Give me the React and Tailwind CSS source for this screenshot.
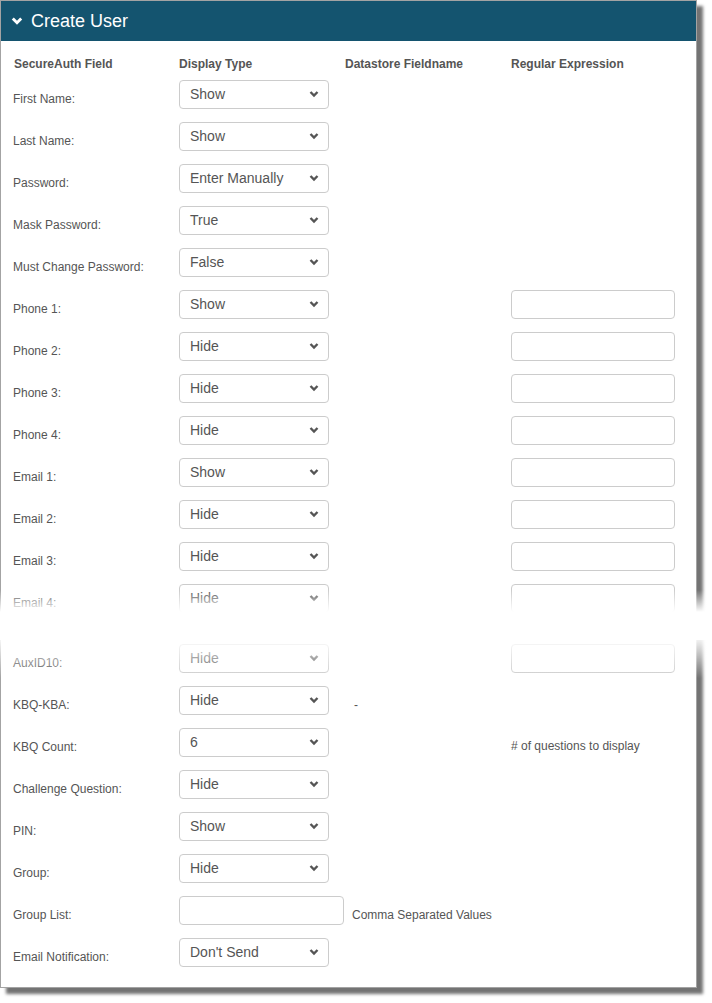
import React from "react";

const FONT = { fontFamily: '"Liberation Sans", Arial, sans-serif' };

const topRows = [
  { label: "First Name:", value: "Show" },
  { label: "Last Name:", value: "Show" },
  { label: "Password:", value: "Enter Manually" },
  { label: "Mask Password:", value: "True" },
  { label: "Must Change Password:", value: "False" },
  { label: "Phone 1:", value: "Show", regex: true },
  { label: "Phone 2:", value: "Hide", regex: true },
  { label: "Phone 3:", value: "Hide", regex: true },
  { label: "Phone 4:", value: "Hide", regex: true },
  { label: "Email 1:", value: "Show", regex: true },
  { label: "Email 2:", value: "Hide", regex: true },
  { label: "Email 3:", value: "Hide", regex: true },
  { label: "Email 4:", value: "Hide", regex: true },
];

const bottomRows = [
  { label: "AuxID10:", value: "Hide", regex: true },
  { label: "KBQ-KBA:", value: "Hide", datastore: "-" },
  { label: "KBQ Count:", value: "6", note: "# of questions to display" },
  { label: "Challenge Question:", value: "Hide" },
  { label: "PIN:", value: "Show" },
  { label: "Group:", value: "Hide" },
  { label: "Group List:", input: true, datastore: "Comma Separated Values" },
  { label: "Email Notification:", value: "Don't Send" },
];

const Chevron = ({ className }) => (
  <svg viewBox="0 0 10 8" className={className} fill="none">
    <path d="M1.5 2 L5 5.5 L8.5 2" stroke="currentColor" strokeWidth="2.4" />
  </svg>
);

const SelectBox = ({ value }) => (
  <div className="flex h-[29px] w-[150px] items-center justify-between rounded-[4px] border border-[#cccccc] bg-white pl-[10px] pr-[9px] text-[14px] text-[#555555]">
    <span>{value}</span>
    <Chevron className="h-[8px] w-[10px] text-[#555555]" />
  </div>
);

const TextBox = ({ width }) => (
  <div
    className={`h-[29px] rounded-[4px] border border-[#cccccc] bg-white ${width}`}
  />
);

const Row = ({ row }) => (
  <div className="grid h-[42px] grid-cols-[166px_166px_166px_166px] items-center">
    <div className="pt-[9px] text-[12px] text-[#555555]">{row.label}</div>
    <div>
      {row.input ? <TextBox width="w-[165px]" /> : <SelectBox value={row.value} />}
    </div>
    <div className="pt-[9px] text-[12px] text-[#555555]">
      {row.datastore === "-" ? (
        <span className="pl-[9px]">-</span>
      ) : row.datastore ? (
        <span className="-ml-[158px] block pl-[165px] whitespace-nowrap">
          {row.datastore}
        </span>
      ) : null}
    </div>
    <div className="text-[12px] text-[#555555]">
      {row.regex && <TextBox width="w-[164px]" />}
      {row.note && <div className="pt-[8px]">{row.note}</div>}
    </div>
  </div>
);

export default function App() {
  return (
    <div className="relative h-[1003px] w-[712px] bg-white" style={FONT}>
      <div className="h-[988px] w-[697px] border border-[#a3a3a3] bg-white shadow-[6px_6px_3px_rgba(0,0,0,0.55)]">
        <div className="flex h-[40px] items-center gap-[8px] bg-[#14546f] pl-[10px] text-white">
          <Chevron className="h-[10px] w-[12px]" />
          <span className="text-[18px]">Create User</span>
        </div>
        <div className="pl-[12px] pt-[14px]">
          <div className="grid h-[18px] grid-cols-[166px_166px_166px_166px] items-center text-[12px] font-bold text-[#555555]">
            <div className="pl-[1px]">SecureAuth Field</div>
            <div>Display Type</div>
            <div>Datastore Fieldname</div>
            <div>Regular Expression</div>
          </div>
          {topRows.map((r) => (
            <Row key={r.label} row={r} />
          ))}
          <div className="h-[18px]" />
          {bottomRows.map((r) => (
            <Row key={r.label} row={r} />
          ))}
        </div>
      </div>
      {/* torn / faded section */}
      <div className="absolute left-0 top-[590px] h-[22px] w-[712px] bg-gradient-to-b from-transparent to-white" />
      <div className="absolute left-0 top-[612px] h-[28px] w-[712px] bg-white" />
      <div className="absolute left-0 top-[640px] h-[38px] w-[712px] bg-gradient-to-b from-white/90 to-transparent" />
    </div>
  );
}
